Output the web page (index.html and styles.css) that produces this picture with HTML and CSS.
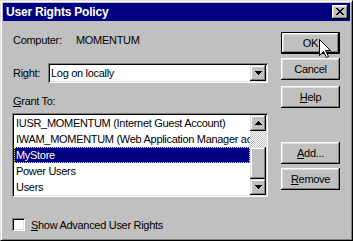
FILE: index.html
```html
<!DOCTYPE html>
<html lang="en">
<head>
  <meta charset="UTF-8">
  <title>User Rights Policy</title>
  <link rel="stylesheet" href="styles.css">
</head>
<body>

  <div class="window">
    <div class="titlebar">
      <span class="title">User Rights Policy</span>
      <span class="close-btn">
        <svg width="8" height="7" shape-rendering="crispEdges"><path d="M0 0h2v1H0zM6 0h2v1H6zM1 1h2v1H1zM5 1h2v1H5zM2 2h4v1H2zM3 3h2v1H3zM2 4h4v1H2zM1 5h2v1H1zM5 5h2v1H5zM0 6h2v1H0zM6 6h2v1H6z"/></svg>
      </span>
    </div>

    <div class="client">
      <div class="main">
        <div class="row computer">
          <span class="label">Computer:</span>
          <span>MOMENTUM</span>
        </div>

        <div class="row right">
          <span class="label-right">Ri<u>g</u>ht:</span>
          <div class="combo">
            <span class="combo-text">Log on locally</span>
            <span class="drop-btn">
              <svg width="7" height="4" shape-rendering="crispEdges"><path d="M0 0h7v1H0zM1 1h5v1H1zM2 2h3v1H2zM3 3h1v1H3z"/></svg>
            </span>
          </div>
        </div>

        <div class="grant"><u>G</u>rant To:</div>

        <div class="listbox">
          <ul class="items">
            <li>IUSR_MOMENTUM (Internet Guest Account)</li>
            <li>IWAM_MOMENTUM (Web Application Manager account)</li>
            <li class="selected">MyStore</li>
            <li>Power Users</li>
            <li>Users</li>
          </ul>
          <div class="scrollbar">
            <span class="sb-btn">
              <svg width="7" height="4" shape-rendering="crispEdges"><path d="M3 0h1v1H3zM2 1h3v1H2zM1 2h5v1H1zM0 3h7v1H0z"/></svg>
            </span>
            <span class="sb-track"></span>
            <span class="sb-thumb"></span>
            <span class="sb-btn">
              <svg width="7" height="4" shape-rendering="crispEdges"><path d="M0 0h7v1H0zM1 1h5v1H1zM2 2h3v1H2zM3 3h1v1H3z"/></svg>
            </span>
          </div>
        </div>

        <div class="check">
          <span class="box"></span>
          <span><u>S</u>how Advanced User Rights</span>
        </div>
      </div>

      <div class="buttons">
        <button class="btn default">OK</button>
        <button class="btn cancel">Cancel</button>
        <button class="btn help"><u>H</u>elp</button>
        <button class="btn add"><u>A</u>dd...</button>
        <button class="btn remove"><u>R</u>emove</button>
      </div>
    </div>
  </div>

  <!-- mouse pointer over the OK button -->
  <svg class="cursor" width="13" height="20"><path d="M0.5 0.5V16.5L4.5 12.5L7.5 18.5L9.5 17.5L6.5 11.5H11.5Z" fill="#fff" stroke="#000" stroke-linejoin="miter"/></svg>

</body>
</html>
```

FILE: styles.css
```css
body {
  margin: 0;
  font-family: "Liberation Sans", Arial, sans-serif;
  font-size: 11px;
  letter-spacing: -0.3px;
  color: #000;
  background: #c0c0c0;
}

u {
  text-underline-offset: 1px;
}

.window {
  width: 353px;
  height: 241px;
  box-sizing: border-box;
  border: 1px solid;
  border-color: #dfdfdf #000 #000 #dfdfdf;
  box-shadow: inset 1px 1px #fff, inset -1px -1px #808080;
  padding: 2px;
  background: #c0c0c0;
}

.titlebar {
  height: 18px;
  background: #000080;
  color: #fff;
  display: flex;
  align-items: center;
  justify-content: space-between;
  padding: 0 2px 0 3px;
}

.title {
  font-weight: bold;
  font-size: 12px;
  letter-spacing: -0.2px;
}

.close-btn {
  width: 16px;
  height: 14px;
  box-sizing: border-box;
  background: #c0c0c0;
  box-shadow: inset -1px -1px #000, inset 1px 1px #fff, inset -2px -2px #808080, inset 2px 2px #dfdfdf;
  display: flex;
  align-items: center;
  justify-content: center;
  padding-bottom: 1px;
}

.client {
  display: flex;
  gap: 13px;
  padding: 11px 10px 0 9px;
}

.main {
  width: 256px;
}

.row {
  display: flex;
  padding-left: 1px;
}

.computer {
  margin-top: 2px;
  line-height: 13px;
}

.computer .label {
  width: 63px;
}

.right {
  align-items: center;
  margin-top: 16px;
}

.label-right {
  width: 35px;
}

.combo {
  width: 220px;
  height: 20px;
  box-sizing: border-box;
  background: #fff;
  box-shadow: inset 1px 1px #808080, inset -1px -1px #fff, inset 2px 2px #000, inset -2px -2px #dfdfdf;
  display: flex;
  align-items: center;
  padding: 2px;
}

.combo-text {
  flex: 1;
  padding-left: 1px;
}

.drop-btn, .sb-btn {
  width: 16px;
  height: 16px;
  box-sizing: border-box;
  background: #c0c0c0;
  box-shadow: inset -1px -1px #000, inset 1px 1px #dfdfdf, inset -2px -2px #808080, inset 2px 2px #fff;
  display: flex;
  align-items: center;
  justify-content: center;
}

.grant {
  margin-top: 12px;
  padding-left: 1px;
  line-height: 13px;
}

.listbox {
  margin-top: 5px;
  height: 84px;
  box-sizing: border-box;
  background: #fff;
  box-shadow: inset 1px 1px #808080, inset -1px -1px #fff, inset 2px 2px #000, inset -2px -2px #dfdfdf;
  padding: 2px;
  display: flex;
}

.items {
  flex: 1;
  list-style: none;
  margin: 0;
  padding: 0;
  overflow: hidden;
}

.items li {
  height: 16px;
  line-height: 16px;
  padding-left: 2px;
  white-space: nowrap;
}

.items li.selected {
  background: #000080;
  color: #fff;
  box-sizing: border-box;
  border: 1px dotted #ffff00;
  padding-left: 1px;
  line-height: 14px;
}

.scrollbar {
  width: 16px;
  display: flex;
  flex-direction: column;
}

.sb-track {
  height: 16px;
  background-image: conic-gradient(#c0c0c0 25%, #fff 0 50%, #c0c0c0 0 75%, #fff 0);
  background-size: 2px 2px;
}

.sb-thumb {
  height: 32px;
  background: #c0c0c0;
  box-sizing: border-box;
  box-shadow: inset -1px -1px #000, inset 1px 1px #dfdfdf, inset -2px -2px #808080, inset 2px 2px #fff;
}

.check {
  display: flex;
  align-items: center;
  gap: 6px;
  margin-top: 21px;
}

.box {
  width: 13px;
  height: 13px;
  box-sizing: border-box;
  background: #fff;
  box-shadow: inset 1px 1px #808080, inset -1px -1px #fff, inset 2px 2px #000, inset -2px -2px #dfdfdf;
}

.buttons {
  width: 59px;
  display: flex;
  flex-direction: column;
}

.btn {
  width: 59px;
  height: 22px;
  padding: 0;
  border: 0;
  font: inherit;
  letter-spacing: inherit;
  color: #000;
  background: #c0c0c0;
  box-shadow: inset -1px -1px #000, inset 1px 1px #fff, inset -2px -2px #808080, inset 2px 2px #dfdfdf;
}

.btn.default {
  box-shadow: inset 0 0 0 1px #000, inset -2px -2px #000, inset 2px 2px #fff, inset -3px -3px #808080, inset 3px 3px #dfdfdf;
}

.cancel, .remove {
  margin-top: 4px;
}

.help {
  margin-top: 6px;
}

.add {
  margin-top: 34px;
}

.cursor {
  position: absolute;
  left: 319px;
  top: 39px;
}
```
